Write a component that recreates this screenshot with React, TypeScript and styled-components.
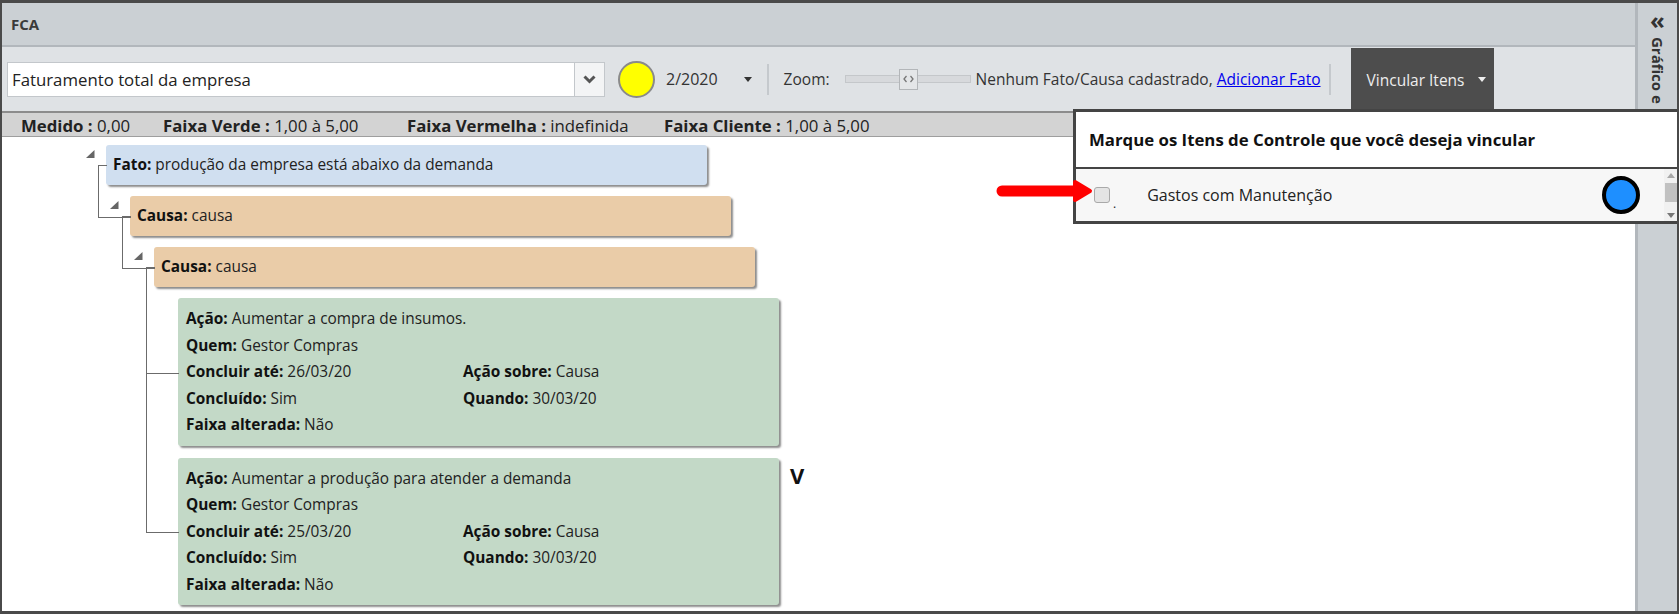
import React from 'react';
import styled, { createGlobalStyle, css } from 'styled-components';

const GlobalStyle = createGlobalStyle`
  html, body { margin: 0; padding: 0; background: #fff; }
  body { font-family: "Open Sans", "Noto Sans", sans-serif; color: #222; }
  * { box-sizing: border-box; }
`;

const Frame = styled.div`
  position: relative;
  width: 1679px;
  height: 614px;
  border-style: solid;
  border-color: #4a4a4a;
  border-width: 3px 2px 3px 2px;
  display: flex;
  overflow: hidden;
  font-size: 15px;
`;

const Main = styled.div`
  flex: 1;
  min-width: 0;
  display: flex;
  flex-direction: column;
`;

const Header = styled.div`
  height: 44px;
  flex: none;
  background: #cbd0d4;
  border-bottom: 2px solid #b2b7bc;
  display: flex;
  align-items: center;
  padding-left: 9px;
  font-weight: 700;
  font-size: 15px;
  color: #3a3a3a;
`;

const Toolbar = styled.div`
  height: 64px;
  flex: none;
  background: #dfe2e5;
  display: flex;
  align-items: center;
  padding-left: 5px;
  color: #333;
`;

const Combo = styled.div`
  width: 598px;
  height: 35px;
  display: flex;
  background: #fff;
  border: 1px solid #c3c7cb;
`;

const ComboText = styled.div`
  flex: 1;
  display: flex;
  align-items: center;
  padding-left: 4px;
  font-size: 16.8px;
  color: #222;
`;

const ComboButton = styled.div`
  width: 30px;
  display: flex;
  align-items: center;
  justify-content: center;
  background: #f3f4f5;
  border-left: 1px solid #c3c7cb;
`;

const StatusDot = styled.div<{ $color: string }>`
  width: 37px;
  height: 37px;
  margin-left: 13px;
  border-radius: 50%;
  background: ${p => p.$color};
  border: 2px solid #8a8a8a;
`;

const Period = styled.span`
  margin-left: 11px;
  font-size: 16px;
`;

const Caret = styled.span<{ $color?: string; $ml: number }>`
  margin-left: ${p => p.$ml}px;
  width: 0;
  height: 0;
  border-left: 4px solid transparent;
  border-right: 4px solid transparent;
  border-top: 5px solid ${p => p.$color || '#333'};
`;

const Sep = styled.span<{ $ml: number }>`
  margin-left: ${p => p.$ml}px;
  width: 2px;
  height: 31px;
  background: #c5c9cd;
`;

const Label = styled.span<{ $ml: number }>`
  margin-left: ${p => p.$ml}px;
  font-size: 15.5px;
  white-space: nowrap;
`;

const Track = styled.div`
  margin-left: 15px;
  width: 126px;
  height: 8px;
  display: flex;
  align-items: center;
  background: #d7d9dc;
  border: 1px solid #c4c7ca;
`;

const Thumb = styled.div`
  margin-left: 53px;
  width: 19px;
  height: 21px;
  flex: none;
  background: #e4e6e8;
  border: 1px solid #b3b6b9;
  display: flex;
  align-items: center;
  justify-content: center;
`;

const Link = styled.a`
  color: #0000ee;
  text-decoration: underline;
`;

const VincularButton = styled.div`
  margin-left: 20px;
  align-self: stretch;
  margin-top: 1px;
  width: 143px;
  background: #4d4d4d;
  color: #eee;
  display: flex;
  align-items: center;
  padding-left: 16px;
  font-size: 15.5px;
`;

const Stats = styled.div`
  height: 26px;
  flex: none;
  background: #d3d3d3;
  border-top: 2px solid #8c8c8c;
  border-bottom: 1px solid #9e9e9e;
  display: flex;
  align-items: center;
  padding: 2px 0 0 19px;
  font-size: 16.8px;
  color: #222;
  white-space: nowrap;
`;

const StatItem = styled.span<{ $w?: number }>`
  ${p => p.$w && css`width: ${p.$w}px;`}
  b { font-weight: 700; }
`;

const Content = styled.div`
  flex: 1;
  background: #fff;
  padding: 8px 0 0 104px;
  overflow: hidden;
`;

const line = '#6b6b6b';

const Branch = styled.div<{ $continue?: boolean }>`
  position: relative;
  ${p => p.$continue && css`
    &::after {
      content: '';
      position: absolute;
      left: -32px;
      top: 0;
      bottom: -12px;
      border-left: 1px solid ${line};
    }
  `}
`;

const Row = styled.div<{ $root?: boolean; $open?: boolean }>`
  position: relative;
  display: flex;
  align-items: flex-start;
  margin-left: -20px;
  ${p => !p.$root && css`
    &::before {
      content: '';
      position: absolute;
      left: -12px;
      top: -11px;
      width: 32px;
      height: calc(50% + 12px);
      border-left: 1px solid ${line};
      border-bottom: 1px solid ${line};
    }
  `}
  ${p => p.$open && css`
    &::after {
      content: '';
      position: absolute;
      left: 12px;
      top: 50%;
      bottom: 0;
      width: 8px;
      border-left: 1px solid ${line};
      border-top: 1px solid ${line};
    }
  `}
`;

const Toggle = styled.div`
  width: 20px;
  flex: none;
  padding-top: 5px;
  svg { display: block; }
`;

const Children = styled.div<{ $gap: number }>`
  padding-left: 24px;
  margin-top: 11px;
  display: flex;
  flex-direction: column;
  gap: ${p => p.$gap}px;
`;

const cardColors = {
  fato: '#d0dff0',
  causa: '#eacca8',
  acao: '#c3d9c7',
};

const Card = styled.div<{ $kind: keyof typeof cardColors }>`
  width: 601px;
  border-radius: 3px;
  background: ${p => cardColors[p.$kind]};
  box-shadow: 2px 2px 2px rgba(0, 0, 0, 0.45);
  font-size: 15.4px;
  color: #222;
  ${p => p.$kind === 'acao'
    ? css`
      padding: 8px 8px 7px;
      display: grid;
      grid-template-columns: 277px 1fr;
      line-height: 26.5px;
    `
    : css`
      padding: 9px 7px;
      line-height: 22px;
    `}
  b { font-weight: 700; color: #111; }
`;

const Wide = styled.div`
  grid-column: 1 / 3;
`;

const Mark = styled.div`
  margin: 6px 0 0 11px;
  font-size: 22px;
  font-weight: 700;
  line-height: 1;
  color: #111;
`;

const Sidebar = styled.div`
  width: 42px;
  flex: none;
  background: #cbd0d4;
  border-left: 3px solid #b2b7bc;
  display: flex;
  flex-direction: column;
  align-items: center;
  padding-top: 6px;
  color: #333;
`;

const Collapse = styled.div`
  font-size: 24px;
  font-weight: 700;
  line-height: 22px;
`;

const VerticalTitle = styled.div`
  margin-top: 6px;
  writing-mode: vertical-rl;
  font-size: 15px;
  font-weight: 700;
  white-space: nowrap;
`;

const Popup = styled.div`
  position: absolute;
  left: 1071px;
  top: 106px;
  width: 606px;
  height: 115px;
  background: #fff;
  border-style: solid;
  border-color: #444;
  border-width: 3px 1px 3px 3px;
  display: flex;
  flex-direction: column;
`;

const PopupHeader = styled.div`
  height: 57px;
  flex: none;
  display: flex;
  align-items: center;
  padding-left: 13px;
  border-bottom: 2px solid #444;
  font-size: 16.8px;
  font-weight: 700;
  color: #111;
`;

const PopupRow = styled.div`
  flex: 1;
  display: flex;
  align-items: center;
  background: #f7f7f7;
  padding-left: 18px;
`;

const Check = styled.span`
  width: 16px;
  height: 16px;
  border-radius: 3px;
  background: #e4e4e4;
  border: 1px solid #a9a9a9;
`;

const Dot = styled.span`
  font-size: 12px;
  align-self: flex-end;
  margin: 0 0 11px 3px;
  line-height: 1;
`;

const ItemName = styled.span`
  margin-left: 31px;
  font-size: 16px;
  color: #222;
`;

const ItemDot = styled.span<{ $color: string }>`
  margin-left: auto;
  width: 38px;
  height: 38px;
  border-radius: 50%;
  background: ${p => p.$color};
  border: 4px solid #000;
`;

const ScrollBar = styled.div`
  margin-left: 24px;
  align-self: stretch;
  width: 14px;
  background: #f1f1f1;
  display: flex;
  flex-direction: column;
  align-items: center;
  justify-content: space-between;
  padding: 4px 0 3px;
`;

const ScrollThumb = styled.div`
  width: 12px;
  height: 19px;
  background: #c1c1c1;
  margin-top: -6px;
`;

const Arrow = styled.svg`
  position: absolute;
  left: 993px;
  top: 173px;
`;

const TriangleIcon = () => (
  <svg width="9" height="8" viewBox="0 0 9 8">
    <polygon points="8.5,0 8.5,8 0,8" fill="#666" />
  </svg>
);

type ActionData = {
  acao: string;
  quem: string;
  concluir: string;
  sobre: string;
  concluido: string;
  quando: string;
  faixa: string;
};

const ActionCard: React.FC<{ data: ActionData }> = ({ data }) => (
  <Card $kind="acao">
    <Wide><b>Ação:</b> {data.acao}</Wide>
    <Wide><b>Quem:</b> {data.quem}</Wide>
    <div><b>Concluir até:</b> {data.concluir}</div>
    <div><b>Ação sobre:</b> {data.sobre}</div>
    <div><b>Concluído:</b> {data.concluido}</div>
    <div><b>Quando:</b> {data.quando}</div>
    <Wide><b>Faixa alterada:</b> {data.faixa}</Wide>
  </Card>
);

const actions: ActionData[] = [
  {
    acao: 'Aumentar a compra de insumos.',
    quem: 'Gestor Compras',
    concluir: '26/03/20',
    sobre: 'Causa',
    concluido: 'Sim',
    quando: '30/03/20',
    faixa: 'Não',
  },
  {
    acao: 'Aumentar a produção para atender a demanda',
    quem: 'Gestor Compras',
    concluir: '25/03/20',
    sobre: 'Causa',
    concluido: 'Sim',
    quando: '30/03/20',
    faixa: 'Não',
  },
];

export default function App() {
  return (
    <>
      <GlobalStyle />
      <Frame>
        <Main>
          <Header>FCA</Header>
          <Toolbar>
            <Combo>
              <ComboText>Faturamento total da empresa</ComboText>
              <ComboButton>
                <svg width="13" height="9" viewBox="0 0 13 9">
                  <polyline points="1.5,1.5 6.5,6.5 11.5,1.5" fill="none" stroke="#555" strokeWidth="3" />
                </svg>
              </ComboButton>
            </Combo>
            <StatusDot $color="#ffff00" />
            <Period>2/2020</Period>
            <Caret $ml={26} />
            <Sep $ml={15} />
            <Label $ml={15}>Zoom:</Label>
            <Track>
              <Thumb>
                <svg width="11" height="8" viewBox="0 0 11 8">
                  <polyline points="3.5,1 1,4 3.5,7" fill="none" stroke="#777" strokeWidth="1.3" />
                  <polyline points="7.5,1 10,4 7.5,7" fill="none" stroke="#777" strokeWidth="1.3" />
                </svg>
              </Thumb>
            </Track>
            <Label $ml={5}>
              Nenhum Fato/Causa cadastrado, <Link href="#">Adicionar Fato</Link>
            </Label>
            <Sep $ml={8} />
            <VincularButton>
              Vincular Itens
              <Caret $ml={14} $color="#eee" />
            </VincularButton>
          </Toolbar>
          <Stats>
            <StatItem $w={142}><b>Medido :</b> 0,00</StatItem>
            <StatItem $w={244}><b>Faixa Verde :</b> 1,00 à 5,00</StatItem>
            <StatItem $w={257}><b>Faixa Vermelha :</b> indefinida</StatItem>
            <StatItem><b>Faixa Cliente :</b> 1,00 à 5,00</StatItem>
          </Stats>
          <Content>
            <Branch>
              <Row $root $open>
                <Toggle><TriangleIcon /></Toggle>
                <Card $kind="fato"><b>Fato:</b> produção da empresa está abaixo da demanda</Card>
              </Row>
              <Children $gap={12}>
                <Branch>
                  <Row $open>
                    <Toggle><TriangleIcon /></Toggle>
                    <Card $kind="causa"><b>Causa:</b> causa</Card>
                  </Row>
                  <Children $gap={12}>
                    <Branch>
                      <Row $open>
                        <Toggle><TriangleIcon /></Toggle>
                        <Card $kind="causa"><b>Causa:</b> causa</Card>
                      </Row>
                      <Children $gap={12}>
                        {actions.map((a, i) => (
                          <Branch key={i} $continue={i < actions.length - 1}>
                            <Row>
                              <Toggle />
                              <ActionCard data={a} />
                              {i === actions.length - 1 && <Mark>V</Mark>}
                            </Row>
                          </Branch>
                        ))}
                      </Children>
                    </Branch>
                  </Children>
                </Branch>
              </Children>
            </Branch>
          </Content>
        </Main>
        <Sidebar>
          <Collapse>«</Collapse>
          <VerticalTitle>Gráfico e Dados</VerticalTitle>
        </Sidebar>

        <Popup>
          <PopupHeader>Marque os Itens de Controle que você deseja vincular</PopupHeader>
          <PopupRow>
            <Check />
            <Dot>.</Dot>
            <ItemName>Gastos com Manutenção</ItemName>
            <ItemDot $color="#1e8fff" />
            <ScrollBar>
              <Caret $ml={0} $color="#a8a8a8" style={{ transform: 'rotate(180deg)' }} />
              <ScrollThumb />
              <Caret $ml={0} $color="#777" />
            </ScrollBar>
          </PopupRow>
        </Popup>

        <Arrow width="100" height="30" viewBox="0 0 100 30">
          <line x1="7" y1="15" x2="84" y2="15" stroke="#ff0000" strokeWidth="11" strokeLinecap="round" />
          <polygon points="80,6 95,15 80,24" fill="#ff0000" stroke="#ff0000" strokeWidth="4" strokeLinejoin="round" />
        </Arrow>
      </Frame>
    </>
  );
}
